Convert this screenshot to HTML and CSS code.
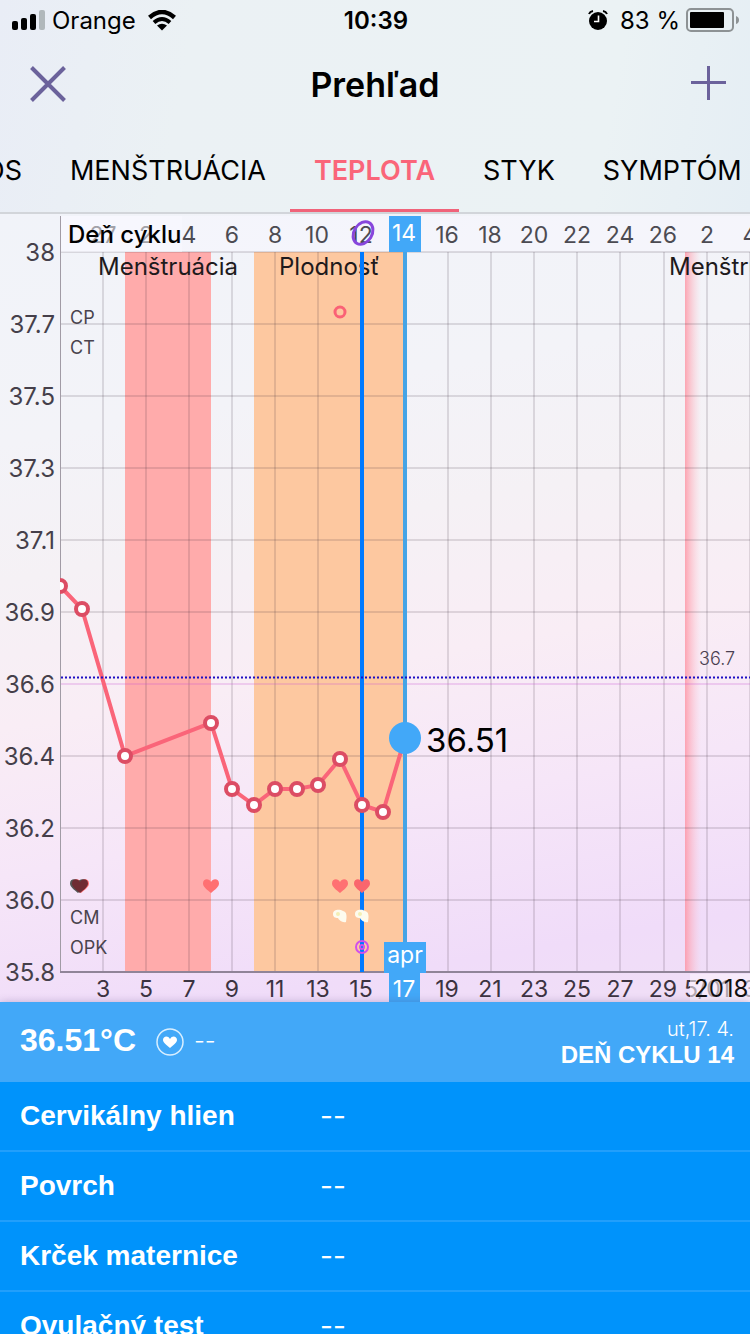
FILE: index.html
```html
<!DOCTYPE html>
<html lang="sk">
<head>
    <meta charset="UTF-8">
    <meta name="viewport" content="width=device-width, initial-scale=1.0">
    <title>Prehľad</title>
    <link rel="stylesheet" href="styles.css">
</head>
<body>
    <div class="app">
        <div class="top">
            <div class="status">
                <div class="status-side">
                    <svg width="34" height="20" viewBox="0 0 34 20">
                        <rect x="0" y="11" width="6" height="9" rx="2"/>
                        <rect x="9" y="8" width="6" height="12" rx="2"/>
                        <rect x="18" y="4" width="6" height="16" rx="2"/>
                        <rect x="27" y="0" width="6" height="20" rx="2" fill="#b1b8bb"/>
                    </svg>
                    <span class="carrier">Orange</span>
                    <svg width="28" height="21" viewBox="0 0 28 21">
                        <path d="M1.500 7.500 Q14 -3.500 26.500 7.500" fill="none" stroke="#000" stroke-width="4.500"/>
                        <path d="M6 12.500 Q14 5.500 22 12.500" fill="none" stroke="#000" stroke-width="4"/>
                        <path d="M9 15.500 Q14 12 19 15.500 L14 20.500 Z"/>
                    </svg>
                </div>
                <div class="time">10:39</div>
                <div class="status-side right">
                    <svg width="20" height="20" viewBox="0 0 20 20">
                        <circle cx="10" cy="11" r="9"/>
                        <path d="M1 4 Q2 1.500 5 1 M19 4 Q18 1.500 15 1" fill="none" stroke="#000" stroke-width="2"/>
                        <path d="M10.500 5.500 V11.500 H6" fill="none" stroke="#fff" stroke-width="1.600"/>
                    </svg>
                    <span class="percent">83 %</span>
                    <svg width="54" height="24" viewBox="0 0 54 24">
                        <rect x="1" y="1" width="46" height="22" rx="4" fill="none" stroke="#8d9294" stroke-width="2"/>
                        <rect x="4" y="4" width="34" height="16" rx="1"/>
                        <path d="M50 8 Q53 9 53 12 Q53 15 50 16 Z" fill="#8d9294"/>
                    </svg>
                </div>
            </div>

            <header class="header">
                <button type="button" class="icon-button" aria-label="Zavrieť">
                    <svg width="36" height="36" viewBox="0 0 36 36">
                        <path d="M1.500 1.500 L34.500 34.500 M34.500 1.500 L1.500 34.500" stroke="#6b629b" stroke-width="4"/>
                    </svg>
                </button>
                <h1>Prehľad</h1>
                <button type="button" class="icon-button" aria-label="Pridať">
                    <svg width="36" height="36" viewBox="0 0 36 36">
                        <path d="M18.500 0 V34 M1 16.500 H36" stroke="#6b629b" stroke-width="3"/>
                    </svg>
                </button>
            </header>

            <nav class="tabs">
                <a href="#" class="tab">OS</a>
                <a href="#" class="tab">MENŠTRUÁCIA</a>
                <a href="#" class="tab active">TEPLOTA</a>
                <a href="#" class="tab">STYK</a>
                <a href="#" class="tab">SYMPTÓM</a>
            </nav>
        </div>

        <svg class="chart" viewBox="0 0 750 788">
            <defs>
                <linearGradient id="nextPeriod">
                    <stop offset="0" stop-color="#ff8a9a" stop-opacity=".75"/>
                    <stop offset=".35" stop-color="#ffa0ae" stop-opacity=".5"/>
                    <stop offset="1" stop-color="#ffc0cc" stop-opacity="0"/>
                </linearGradient>
                <clipPath id="plot">
                    <rect x="60" y="0" width="690" height="760"/>
                </clipPath>
                <path id="heart" d="M0 7 C-4 3.500 -8 1 -8 -2.500 C-8 -7.500 -2 -8 0 -4 C2 -8 8 -7.500 8 -2.500 C8 1 4 3.500 0 7 Z"/>
                <g id="mucus">
                    <path d="M-7 -2 C-7 -7 0 -7 3 -5 C7 -4 7 0 6 6 C2 7 -1 4 -2 2 C-5 2 -7 1 -7 -2 Z" fill="#fdfbee"/>
                    <circle cx="-2" cy="-2" r="2" fill="#f4efb4"/>
                </g>
            </defs>

            <rect x="61" y="2" width="689" height="36" fill="#f6f6fd" opacity=".6"/>

            <!-- fazy cyklu -->
            <rect x="125" y="38" width="86" height="720" fill="#ffabab"/>
            <rect x="254" y="38" width="151" height="720" fill="#fdc8a0"/>
            <rect x="685" y="38" width="16" height="720" fill="url(#nextPeriod)"/>

            <!-- mriezka -->
            <path class="grid" d="M103 38V758M146 38V758M189 38V758M232 38V758M275 38V758M318 38V758M361 38V758M448 38V758M491 38V758M534 38V758M577 38V758M620 38V758M664 38V758M707 38V758M750 38V758"/>
            <path class="grid" d="M61 38H750M61 110H750M61 182H750M61 254H750M61 326H750M61 398H750M61 542H750M61 614H750M61 686H750"/>
            <path class="grid purple" d="M61 470H750"/>
            <path d="M60.500 2V758" stroke="#a19ba5"/>
            <path d="M60 758H750" stroke="#908498" stroke-width="2"/>

            <g class="y-axis">
                <text x="55" y="47">38</text>
                <text x="55" y="119">37.7</text>
                <text x="55" y="191">37.5</text>
                <text x="55" y="263">37.3</text>
                <text x="55" y="335">37.1</text>
                <text x="55" y="407">36.9</text>
                <text x="55" y="479">36.6</text>
                <text x="55" y="551">36.4</text>
                <text x="55" y="623">36.2</text>
                <text x="55" y="695">36.0</text>
                <text x="55" y="767">35.8</text>
            </g>

            <g class="x-axis">
                <text x="103" y="29">27</text>
                <text x="146" y="29">2</text>
                <rect x="61" y="2" width="121" height="36" fill="#fafaff" opacity=".5"/>
                <text x="189" y="29">4</text>
                <text x="232" y="29">6</text>
                <text x="275" y="29">8</text>
                <text x="317" y="29">10</text>
                <text x="361" y="29">12</text>
                <text x="447" y="29">16</text>
                <text x="490" y="29">18</text>
                <text x="534" y="29">20</text>
                <text x="577" y="29">22</text>
                <text x="620" y="29">24</text>
                <text x="663" y="29">26</text>
                <text x="707" y="29">2</text>
                <text x="750" y="29">4</text>
            </g>
            <text x="68" y="29" class="row-title">Deň cyklu</text>

            <g class="x-axis dark">
                <text x="103" y="783">3</text>
                <text x="146" y="783">5</text>
                <text x="189" y="783">7</text>
                <text x="232" y="783">9</text>
                <text x="275" y="783">11</text>
                <text x="318" y="783">13</text>
                <text x="361" y="783">15</text>
                <text x="447" y="783">19</text>
                <text x="490" y="783">21</text>
                <text x="534" y="783">23</text>
                <text x="577" y="783">25</text>
                <text x="620" y="783">27</text>
                <text x="663" y="783">29</text>
                <text x="707" y="783">5/01</text>
                <text x="750" y="783">3</text>
            </g>
            <rect x="690" y="760" width="60" height="28" fill="#fbf3fd" opacity=".6"/>
            <text x="694" y="783" class="year">2018</text>

            <text x="98" y="61" class="phase">Menštruácia</text>
            <text x="279" y="61" class="phase">Plodnosť</text>
            <text x="669" y="61" class="phase">Menštruácia</text>

            <g class="marks">
                <text x="70" y="110">CP</text>
                <text x="70" y="140">CT</text>
                <text x="70" y="710">CM</text>
                <text x="70" y="740">OPK</text>
            </g>

            <!-- ovulacia -->
            <path d="M362 38V758" stroke="#007aff" stroke-width="4"/>
            <ellipse cx="363" cy="19" rx="9" ry="12" transform="rotate(32 363 19)" fill="none" stroke="#8746dc" stroke-width="3"/>
            <circle cx="340" cy="98" r="5" fill="none" stroke="#fa6276" stroke-width="3"/>

            <path d="M405 38V730" stroke="#45a4e6" stroke-width="4"/>

            <!-- teplota -->
            <g clip-path="url(#plot)">
                <polyline points="60,372 82,395 125,542 211,509 232,575 254,591 275,575 297,575 318,571 340,545 362,591 383,598 405,524" fill="none" stroke="#fa6579" stroke-width="4"/>
                <g class="points">
                    <circle cx="60" cy="372" r="6"/>
                    <circle cx="82" cy="395" r="6"/>
                    <circle cx="125" cy="542" r="6"/>
                    <circle cx="211" cy="509" r="6"/>
                    <circle cx="232" cy="575" r="6"/>
                    <circle cx="254" cy="591" r="6"/>
                    <circle cx="275" cy="575" r="6"/>
                    <circle cx="297" cy="575" r="6"/>
                    <circle cx="318" cy="571" r="6"/>
                    <circle cx="340" cy="545" r="6"/>
                    <circle cx="362" cy="591" r="6"/>
                    <circle cx="383" cy="598" r="6"/>
                </g>
            </g>
            <path d="M61 463.500H750" stroke="#1c0ec4" stroke-width="2" stroke-dasharray="2 2"/>
            <text x="699" y="451" class="limit">36.7</text>
            <circle cx="405" cy="524" r="16" fill="#42a8f8"/>
            <text x="426" y="538" class="value">36.51</text>

            <use href="#heart" x="81" y="672" fill="#ff6f73"/>
            <use href="#heart" x="78" y="672" fill="#555"/>
            <use href="#heart" x="80" y="672" fill="#6f2c33"/>
            <use href="#heart" x="211" y="672" fill="#ff7072"/>
            <use href="#heart" x="340" y="672" fill="#ff7072"/>
            <use href="#heart" x="362" y="672" fill="#fa666d"/>
            <use href="#mucus" x="340" y="702"/>
            <use href="#mucus" x="362" y="702"/>
            <g fill="none" stroke="#d050ec" stroke-width="2">
                <circle cx="362" cy="733" r="6"/>
                <circle cx="362" cy="733" r="2"/>
            </g>

            <g class="selected">
                <rect x="389" y="2" width="32" height="36"/>
                <rect x="384" y="728" width="42" height="31"/>
                <rect x="389" y="758" width="31" height="30"/>
                <text x="404" y="27">14</text>
                <text x="405" y="749">apr</text>
                <text x="404" y="783">17</text>
            </g>
        </svg>

        <section class="summary">
            <strong class="temp">36.51°C</strong>
            <svg width="28" height="28" viewBox="0 0 28 28">
                <circle cx="14" cy="14" r="13" fill="none" stroke="#d9efff" stroke-width="1.500"/>
                <path d="M14 20 C11 17 7 15 7 12 C7 8 12 7 14 11 C16 7 21 8 21 12 C21 15 17 17 14 20 Z" fill="#fff"/>
            </svg>
            <span class="none">--</span>
            <div class="day">
                <div class="date">ut,17. 4.</div>
                <div class="cycle-day">DEŇ CYKLU 14</div>
            </div>
        </section>

        <dl class="details">
            <div class="row"><dt>Cervikálny hlien</dt><dd>--</dd></div>
            <div class="row"><dt>Povrch</dt><dd>--</dd></div>
            <div class="row"><dt>Krček maternice</dt><dd>--</dd></div>
            <div class="row"><dt>Ovulačný test</dt><dd>--</dd></div>
        </dl>
    </div>
</body>
</html>
```
FILE: styles.css
```css
* {
    box-sizing: border-box;
}
body {
    margin: 0;
    font-family: Inter, Roboto, sans-serif;
    color: #000;
    background-color: #0093fb;
}
.app {
    height: 100vh;
    overflow: hidden;
    display: flex;
    flex-direction: column;
}
.app > * {
    flex-shrink: 0;
}
.top {
    background: linear-gradient(100deg, #e9edf6, #ebf1f4 25%, #ebf2f4 80%, #e5eef4);
}
.status {
    display: grid;
    grid-template-columns: 1fr auto 1fr;
    align-items: center;
    height: 40px;
    padding: 0 10px 0 12px;
    font-size: 24px;
}
.status-side {
    display: flex;
    align-items: center;
}
.status-side.right {
    justify-content: flex-end;
}
.carrier {
    margin: 0 12px 0 6px;
}
.time {
    font-weight: 600;
}
.percent {
    margin: 0 6px 0 12px;
    word-spacing: normal;
}
.header {
    display: grid;
    grid-template-columns: 1fr auto 1fr;
    align-items: center;
    height: 88px;
    padding: 0 24px 0 30px;
}
.header h1 {
    margin: 0 6px 0 0;
    font-size: 34px;
    font-weight: 600;
}
.icon-button {
    display: flex;
    padding: 0;
    border: none;
    background: none;
    cursor: pointer;
}
.icon-button:last-child {
    justify-self: end;
}
.tabs {
    display: flex;
    height: 86px;
    overflow: hidden;
    border-bottom: 2px solid #d2d5da;
}
.tab {
    flex-shrink: 0;
    height: 84px;
    padding: 0 24px;
    font-size: 27px;
    line-height: 86px;
    color: #000;
    text-decoration: none;
}
.tab:first-child {
    margin-left: -40px;
}
.tab.active {
    color: #fa6579;
    font-weight: 600;
    border-bottom: 3px solid #f0637a;
}
.chart {
    display: block;
    width: 100%;
    height: auto;
    background: linear-gradient(170deg, #f1f3f9 0%, #f3f3f8 25%, #f5f1f5 40%, #f9edf5 56%, #f6e6f8 72%, #f0dcf9 90%, #f0dff6 100%);
}
.grid {
    stroke: rgba(60, 40, 60, .14);
    stroke-width: 2;
}
.grid.purple {
    stroke: rgba(200, 80, 210, .22);
}
.y-axis {
    font-size: 24px;
    fill: #453f4a;
    text-anchor: end;
}
.x-axis {
    font-size: 23px;
    fill: #4c4b52;
    text-anchor: middle;
}
.x-axis.dark {
    fill: #3c3340;
}
.row-title {
    font-size: 24px;
    font-weight: 500;
}
.year {
    font-size: 24px;
    fill: #111;
}
.phase {
    font-size: 24px;
    fill: #1e1a1c;
}
.marks {
    font-size: 18px;
    fill: #4a434e;
}
.limit {
    font-size: 18px;
    font-weight: 300;
    fill: #4a3f50;
}
.value {
    font-size: 33px;
}
.points circle {
    fill: #fff;
    stroke: #dc4d64;
    stroke-width: 4;
}
.selected {
    font-size: 23px;
    text-anchor: middle;
    fill: #42a8f8;
}
.selected text {
    fill: #fff;
}
.summary {
    display: flex;
    align-items: center;
    height: 80px;
    padding: 0 16px 0 20px;
    font-family: "Liberation Sans", Arial, sans-serif;
    color: #fff;
    background-color: #42a8f8;
    box-shadow: 0 0 8px rgba(80, 60, 120, .3);
}
.temp {
    margin-right: 20px;
    padding-bottom: 4px;
    font-size: 32px;
}
.none {
    margin-left: 10px;
    padding-bottom: 4px;
    font-family: Inter, sans-serif;
    font-size: 24px;
    font-weight: 300;
}
.day {
    margin-left: auto;
    text-align: right;
}
.date {
    font-family: Inter, sans-serif;
    font-size: 20px;
    font-weight: 300;
    line-height: 26px;
}
.cycle-day {
    font-size: 24px;
    font-weight: bold;
    line-height: 26px;
}
.details {
    margin: 0;
    font-family: "Liberation Sans", Arial, sans-serif;
    font-size: 28px;
    color: #fff;
    background-color: #0093fb;
}
.row {
    display: flex;
    align-items: center;
    height: 70px;
    padding: 0 20px;
    border-bottom: 2px solid #229ffb;
}
.row dt {
    width: 300px;
    font-weight: bold;
}
.row dd {
    margin: 0;
    font-family: Inter, sans-serif;
}
```
